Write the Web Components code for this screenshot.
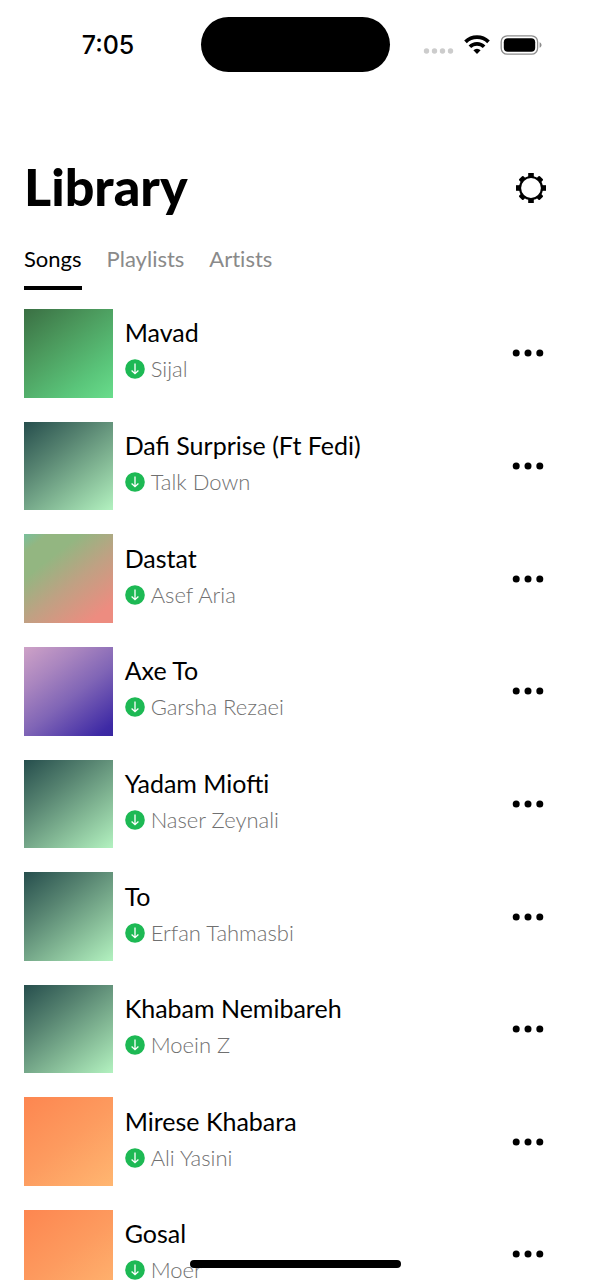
<!DOCTYPE html>
<html lang="en">
<head>
<meta charset="utf-8">
<meta name="viewport" content="width=device-width, initial-scale=1">
<title>Library</title>
<style>
html, body { margin: 0; height: 100%; background: #fff; }
body { font-family: Lato, "Noto Sans", sans-serif; color: #000; }
</style>
</head>
<body>
<music-library></music-library>
<script>
const define = (name, html, setup) => customElements.define(name, class extends HTMLElement {
  constructor() {
    super();
    const t = document.createElement('template');
    t.innerHTML = html;
    this.attachShadow({ mode: 'open' }).append(t.content.cloneNode(true));
  }
  connectedCallback() { if (setup) setup(this, this.shadowRoot); }
});

define('status-bar', `
<style>
:host { display: grid; grid-template-columns: 1fr 189px 1fr; align-items: center; height: 89px; flex: none; }
time { font: 500 25px/32px Inter, sans-serif; justify-self: center; padding-left: 15px; }
.island { height: 55px; border-radius: 28px; background: #000; }
.icons { display: flex; align-items: center; justify-content: flex-end; padding-right: 49px; gap: 10px; }
svg { display: block; }
</style>
<time>7:05</time>
<div class="island"></div>
<div class="icons">
  <svg width="31" height="20" viewBox="0 0 31 20" fill="#ccc" aria-hidden="true"><circle cx="3.5" cy="16" r="2.7"/><circle cx="11.5" cy="16" r="2.7"/><circle cx="19.5" cy="16" r="2.7"/><circle cx="27.5" cy="16" r="2.7"/></svg>
  <svg width="26" height="20" viewBox="0 0 26 20" aria-hidden="true"><g fill="none" stroke="#000" stroke-width="3.7"><path d="M1.500 6.900a16.400 16.400 0 0 1 23 0"/><path d="M5.900 11.800a10 10 0 0 1 14.200 0"/></g><path d="M9.400 15.200a5 5 0 0 1 7.200 0L13 19z" fill="#000"/></svg>
  <svg width="42" height="20" viewBox="0 0 42 20" aria-hidden="true"><rect x="1.200" y=".8" width="36.400" height="18.400" rx="6" fill="none" stroke="#8c8c8c" stroke-width="1.300"/><rect x="3.800" y="3.200" width="31.400" height="13.600" rx="4" fill="#000"/><path d="M39.600 7.300v5.400c2.600-1 2.600-4.400 0-5.400z" fill="#8c8c8c"/></svg>
</div>`);

define('page-header', `
<style>
:host { display: flex; align-items: center; justify-content: space-between; padding: 67px 44px 0 24px; flex: none; }
h1 { margin: 0; padding-bottom: 4px; font-size: 52px; line-height: 60px; font-weight: 900; }
button { border: 0; padding: 0; background: none; color: inherit; cursor: pointer; }
svg { display: block; }
</style>
<h1><slot></slot></h1>
<button aria-label="Settings"><svg width="32" height="32" viewBox="0 0 32 32">
<g><rect x="13.200" y="1" width="5.600" height="30"/><rect x="1" y="13.200" width="30" height="5.600"/></g>
<g transform="rotate(45 16 16)"><rect x="13" y="1.400" width="6" height="29.200" rx="1"/><rect x="1.400" y="13" width="29.200" height="6" rx="1"/></g>
<circle cx="16" cy="16" r="11" fill="#fff" stroke="#000" stroke-width="2.200"/></svg></button>`);

define('tab-bar', `
<style>
:host { display: flex; gap: 25px; padding: 23px 24px 0; flex: none; }
</style><slot></slot>`);

define('tab-item', `
<style>
:host { display: block; color: #8a8a8a; }
button { font: inherit; font-size: 22px; line-height: 32px; color: inherit; background: none; border: 0; border-bottom: 4px solid transparent; padding: 0 0 11px; cursor: pointer; display: block; font-variant-ligatures: none; }
:host([selected]) { color: #000; }
:host([selected]) button { border-color: #000; }
</style><button><slot></slot></button>`);

define('song-row', `
<style>
:host { display: flex; align-items: center; gap: 12px; }
.cover { flex: none; width: 15vw; aspect-ratio: 1; background: linear-gradient(142deg, var(--cover)); }
.text { flex: 1; min-width: 0; padding-bottom: 5px; }
h2 { margin: 0; font-size: 25px; line-height: 32px; font-weight: 400; white-space: nowrap; }
p { margin: 5px 0 0; display: flex; align-items: center; gap: 6px; font-size: 22px; line-height: 32px; font-weight: 300; color: #707070; }
button { border: 0; padding: 12px 0; background: none; cursor: pointer; }
svg { display: block; }
</style>
<div class="cover"></div>
<div class="text">
  <h2><slot></slot></h2>
  <p><svg width="20" height="20" viewBox="0 0 20 20" aria-hidden="true"><circle cx="10" cy="10" r="9.800" fill="#1db954"/><path d="M10 4.500v10M6.600 11.600l3.400 3.100 3.400-3.100" fill="none" stroke="#fff" stroke-width="1.300"/></svg><slot name="artist"></slot></p>
</div>
<button aria-label="More options"><svg width="32" height="8" viewBox="0 0 32 8"><circle cx="4.200" cy="4" r="3.500"/><circle cx="16" cy="4" r="3.500"/><circle cx="27.800" cy="4" r="3.500"/></svg></button>`);

define('home-indicator', `
<style>
:host { position: fixed; bottom: 12px; left: 0; right: 0; pointer-events: none; }
div { width: 211px; height: 8px; border-radius: 4px; background: #000; margin: 0 auto; }
</style><div></div>`);

const songs = [
  ['Mavad', 'Sijal', '#3a6f43, #4b985c 35%, #5ac57a 75%, #69dd8c'],
  ['Dafi Surprise (Ft Fedi)', 'Talk Down', '#264e4d, #578471 35%, #82b794 65%, #b3f2c0'],
  ['Dastat', 'Asef Aria', '#79bf9c, #93b681 12%, #93b681 28%, #bfa183 55%, #ed8c80 88%, #ed8c80'],
  ['Axe To', 'Garsha Rezaei', '#cea2c7, #a985bf 28%, #8065b6 55%, #3e2aa5 92%, #3826a0'],
  ['Yadam Miofti', 'Naser Zeynali', '#264e4d, #578471 35%, #82b794 65%, #b3f2c0'],
  ['To', 'Erfan Tahmasbi', '#264e4d, #578471 35%, #82b794 65%, #b3f2c0'],
  ['Khabam Nemibareh', 'Moein Z', '#264e4d, #578471 35%, #82b794 65%, #b3f2c0'],
  ['Mirese Khabara', 'Ali Yasini', '#fd8650, #fd9b5f 50%, #ffb671'],
  ['Gosal', 'Moer', '#fd8650, #fd9b5f 50%, #ffb671']
];

define('music-library', `
<style>
:host { display: flex; flex-direction: column; height: 100vh; overflow: hidden; }
main { display: flex; flex-direction: column; gap: 24px; padding: 19px 47px 24px 24px; overflow-y: auto; scrollbar-width: none; flex: 1; min-height: 0; }
</style>
<status-bar></status-bar>
<page-header>Library</page-header>
<tab-bar><tab-item selected>Songs</tab-item><tab-item>Playlists</tab-item><tab-item>Artists</tab-item></tab-bar>
<main></main>
<home-indicator></home-indicator>`, (host, root) => {
  const main = root.querySelector('main');
  main.replaceChildren(...songs.map(([title, artist, cover]) => {
    const row = document.createElement('song-row');
    row.style.setProperty('--cover', cover);
    const by = document.createElement('span');
    by.slot = 'artist';
    by.textContent = artist;
    row.append(title, by);
    return row;
  }));
});
</script>
</body>
</html>
